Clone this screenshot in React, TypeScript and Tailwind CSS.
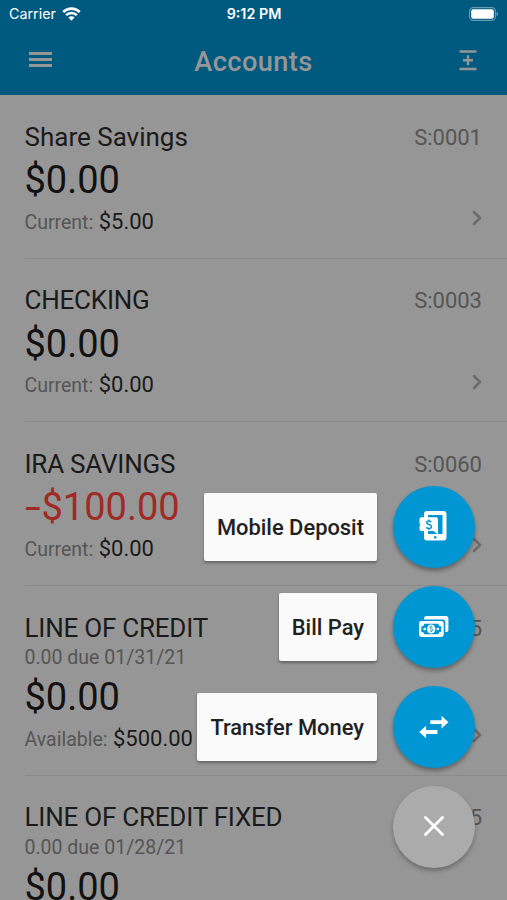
import type { ReactNode } from 'react';
import { ChevronRight } from 'lucide-react';
import { clsx } from 'clsx';

interface Account {
  name: string;
  suffix: string;
  due?: string;
  amount: string;
  negative?: boolean;
  label: string;
  value: string;
}

const accounts: Account[] = [
  { name: 'Share Savings', suffix: 'S:0001', amount: '$0.00', label: 'Current:', value: '$5.00' },
  { name: 'CHECKING', suffix: 'S:0003', amount: '$0.00', label: 'Current:', value: '$0.00' },
  { name: 'IRA SAVINGS', suffix: 'S:0060', amount: '$100.00', negative: true, label: 'Current:', value: '$0.00' },
  { name: 'LINE OF CREDIT', suffix: 'L:0045', due: '0.00 due 01/31/21', amount: '$0.00', label: 'Available:', value: '$500.00' },
  { name: 'LINE OF CREDIT FIXED', suffix: 'L:0055', due: '0.00 due 01/28/21', amount: '$0.00', label: '', value: '' },
];

function WifiIcon() {
  return (
    <svg width="19" height="14" viewBox="0 0 19 14" fill="none" stroke="#fff" strokeWidth="2.6">
      <path d="M1.2 5a11.8 11.8 0 0 1 16.6 0" />
      <path d="M4.1 8.2a7.6 7.6 0 0 1 10.8 0" />
      <path d="M9.5 13.8 6.4 10.6a4.4 4.4 0 0 1 6.2 0z" fill="#fff" stroke="none" />
    </svg>
  );
}

function BatteryIcon() {
  return (
    <svg width="30" height="14" viewBox="0 0 30 14">
      <rect x="0.6" y="0.6" width="25.8" height="12.8" rx="3.6" fill="none" stroke="#fff" strokeOpacity="0.4" strokeWidth="1.1" />
      <rect x="2.2" y="2.2" width="22.6" height="9.6" rx="2" fill="#fff" />
      <path d="M27.6 4.9c1.7.6 1.7 3.6 0 4.2z" fill="#fff" fillOpacity="0.5" />
    </svg>
  );
}

function MobileDepositIcon() {
  return (
    <svg className="mb-[2px] mr-[2px]" width="28" height="30" viewBox="0 0 28 30">
      <path
        fillRule="evenodd"
        d="M8 0h16.5a3 3 0 0 1 3 3v23.4a3 3 0 0 1-3 3H8a3 3 0 0 1-3-3V3a3 3 0 0 1 3-3zM9 4v19h14.500V4zM14.800 26.300a1.400 1.400 0 1 0 2.800 0 1.400 1.400 0 1 0-2.800 0z"
        fill="#fff"
      />
      <path d="M2.500 6.200h14.500a2 2 0 0 1 2 2v15.300l-4.500-3.500H2.500a2 2 0 0 1-2-2V15l1-1.200-1-1.300V8.200a2 2 0 0 1 2-2z" fill="#fff" />
      <path d="M12.200 11.200c-.4-.9-1.200-1.300-2.200-1.300-1.300 0-2.300.7-2.300 1.800 0 2.500 4.800 1.200 4.800 3.900 0 1.200-1 2-2.500 2-1.200 0-2.200-.5-2.600-1.500M10 8.500V10M10 17.500v1.600" fill="none" stroke="#0095d3" strokeWidth="1.5" />
    </svg>
  );
}

function BillPayIcon() {
  return (
    <svg width="30" height="22" viewBox="0 0 30 22">
      <path d="M5 3.500V2.600A2.600 2.600 0 0 1 7.600 0h19.200a2.600 2.600 0 0 1 2.600 2.600v10.800a2.600 2.600 0 0 1-2.600 2.600h-.5V6a2.500 2.500 0 0 0-2.500-2.500z" fill="#fff" />
      <rect x="0" y="5" width="24.7" height="16" rx="2.4" fill="#fff" />
      <path d="M5 7.700h14.500a2.600 2.600 0 0 0 2.700 2.600v5.400a2.600 2.600 0 0 0-2.700 2.600H5a2.600 2.600 0 0 0-2.700-2.600v-5.400A2.600 2.600 0 0 0 5 7.700z" fill="#0095d3" />
      <ellipse cx="12.2" cy="13" rx="4.2" ry="4.6" fill="#fff" />
      <circle cx="5.7" cy="13" r="1.3" fill="#fff" />
      <circle cx="18.8" cy="13" r="1.3" fill="#fff" />
      <path d="M13.600 11.300c-.7-.9-2.700-.7-2.700.4 0 1.500 2.800.9 2.800 2.400 0 1.200-2.200 1.300-2.900.4M12.200 9.800v1M12.200 15.100v1.100" fill="none" stroke="#0095d3" strokeWidth="1" />
    </svg>
  );
}

function TransferIcon() {
  return (
    <svg width="30" height="24" viewBox="0 0 30 24" fill="#fff">
      <path d="M11.300 5.200H22.600V.8L29.400 7.200 22.600 13.500V9.100H11.300z" />
      <path d="M18.400 14.900H7.100v-4.200L.2 17l6.900 6.300v-4.400h11.300z" />
    </svg>
  );
}

function CloseIcon() {
  return (
    <svg className="mb-[2px]" width="20" height="20" viewBox="0 0 20 20" fill="none" stroke="#fff" strokeWidth="2.8" strokeLinecap="round">
      <path d="m1.500 1.500 17 17M18.500 1.500l-17 17" />
    </svg>
  );
}

const actions: { label: string; icon: ReactNode }[] = [
  { label: 'Mobile Deposit', icon: <MobileDepositIcon /> },
  { label: 'Bill Pay', icon: <BillPayIcon /> },
  { label: 'Transfer Money', icon: <TransferIcon /> },
];

function Header() {
  return (
    <header className="h-[95px] bg-[#00597f]">
      {/* Status bar */}
      <div className="grid h-[27px] grid-cols-3 items-center pl-[9px] pr-[8px] font-['Inter','Liberation_Sans',sans-serif] text-[14.3px] text-white">
        <div className="flex items-center gap-[6px]">
          <span>Carrier</span>
          <WifiIcon />
        </div>
        <span className="text-center font-semibold">9:12 PM</span>
        <div className="flex justify-end">
          <BatteryIcon />
        </div>
      </div>
      {/* Title bar */}
      <div className="flex h-[68px] items-center justify-between pl-[29px] pr-[30px]">
        <div className="mb-[3px] flex w-[23px] flex-col gap-[3px]">
          <span className="h-[3px] bg-[#969696]" />
          <span className="h-[3px] bg-[#969696]" />
          <span className="h-[3px] bg-[#969696]" />
        </div>
        <h1 className="-ml-[4px] pt-[2px] text-[27.2px] font-medium tracking-[0.4px] text-[#969696]">Accounts</h1>
        <svg className="mb-[2px]" width="18" height="21" viewBox="0 0 18 21" stroke="#969696" strokeWidth="2.4">
          <path d="M.5 1.500h17M.5 19h17M9 5.300v10M4 10.300h10" />
        </svg>
      </div>
    </header>
  );
}

function AccountRow({ account }: { account: Account }) {
  const isCaps = account.name === account.name.toUpperCase();

  return (
    <li className="ml-[24.500px] border-b border-[#8b8b8b] pr-[25px] pt-[26px]">
      <div className={clsx('flex flex-col', account.due ? 'h-[162.500px]' : 'h-[136.700px]')}>
        <div className="flex h-[32px] items-center justify-between">
          <span className={clsx('text-[26px] text-[#1a1a1a]', isCaps && 'tracking-[-0.220px]')}>{account.name}</span>
          <span className="text-[22px] text-[#555]">{account.suffix}</span>
        </div>
        {account.due && <div className="h-[26px] text-[19.500px] leading-[27px] text-[#555]">{account.due}</div>}
        <div
          className={clsx(
            'flex h-[54px] text-[38px] leading-[54px]',
            account.negative ? 'text-[#a02a24]' : 'text-[#111]',
          )}
        >
          {account.negative && <span className="w-[17px] origin-left scale-x-150">-</span>}
          <span>{account.amount}</span>
        </div>
        {account.label && (
          <div className="flex h-[28px] items-center justify-between">
            <div className="flex items-baseline gap-[5.500px]">
              <span className="text-[19.500px] text-[#555]">{account.label}</span>
              <span className="text-[22px] text-[#1a1a1a]">{account.value}</span>
            </div>
            <ChevronRight className="-mr-[7px] mt-[-6px] h-6 w-6 text-[#6b6b6b]" strokeWidth={2.5} />
          </div>
        )}
      </div>
    </li>
  );
}

function ActionMenu() {
  return (
    <div className="absolute bottom-[32px] right-[32px] flex flex-col items-end gap-[18px]">
      {actions.map((action) => (
        <div key={action.label} className="flex items-center gap-4">
          <span className="flex h-[68px] items-center rounded-[2px] bg-[#fafafa] px-[13px] pt-[2px] text-[21.900px] font-medium text-[#212121] shadow-[0_2px_3px_#00000055]">
            {action.label}
          </span>
          <button className="flex h-[82px] w-[82px] items-center justify-center rounded-full bg-[#0095d3] shadow-[0_3px_4px_#00000055]">
            {action.icon}
          </button>
        </div>
      ))}
      <button className="flex h-[82px] w-[82px] items-center justify-center rounded-full bg-[#ababab] shadow-[0_3px_4px_#00000044]">
        <CloseIcon />
      </button>
    </div>
  );
}

export default function App() {
  return (
    <div className="relative h-[900px] w-[507px] overflow-hidden bg-[#969696] font-['Roboto','Liberation_Sans',sans-serif]">
      <Header />
      <ul>
        {accounts.map((account) => (
          <AccountRow key={account.name} account={account} />
        ))}
      </ul>
      <ActionMenu />
    </div>
  );
}
